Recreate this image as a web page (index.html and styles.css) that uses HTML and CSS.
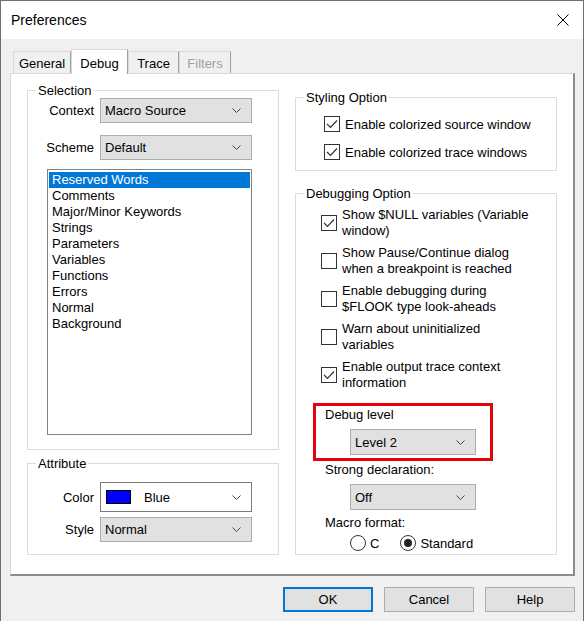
FILE: index.html
```html
<!DOCTYPE html>
<html>
<head>
<meta charset="utf-8">
<title>Preferences</title>
<link rel="stylesheet" href="styles.css">
</head>
<body>
<div class="window">
  <div class="titlebar">
    <span class="title">Preferences</span>
    <span class="close"><svg width="12" height="12" viewBox="0 0 12 12"><path d="M0.5 0.5 L11.5 11.5 M11.5 0.5 L0.5 11.5" stroke="#000" stroke-width="1" fill="none"/></svg></span>
  </div>
  <div class="client">
    <div class="tabs">
      <div class="tab t-general">General</div>
      <div class="tab t-debug active">Debug</div>
      <div class="tab t-trace">Trace</div>
      <div class="tab t-filters disabled">Filters</div>
    </div>
    <div class="panel">
      <div class="col col-left">
        <fieldset class="group selection">
          <legend>Selection</legend>
          <div class="field">
            <label>Context</label>
            <div class="combo">Macro Source<svg class="chev" width="9" height="5" viewBox="0 0 9 5"><polyline points="0.5,0.5 4.5,4.5 8.5,0.5" fill="none" stroke="#444"/></svg></div>
          </div>
          <div class="field field-2">
            <label>Scheme</label>
            <div class="combo">Default<svg class="chev" width="9" height="5" viewBox="0 0 9 5"><polyline points="0.5,0.5 4.5,4.5 8.5,0.5" fill="none" stroke="#444"/></svg></div>
          </div>
          <ul class="listbox">
            <li class="selected">Reserved Words</li>
            <li>Comments</li>
            <li>Major/Minor Keywords</li>
            <li>Strings</li>
            <li>Parameters</li>
            <li>Variables</li>
            <li>Functions</li>
            <li>Errors</li>
            <li>Normal</li>
            <li>Background</li>
          </ul>
        </fieldset>
        <fieldset class="group attribute">
          <legend>Attribute</legend>
          <div class="field field-color">
            <label>Color</label>
            <div class="combo combo-white"><span class="swatch"></span><span class="combo-text">Blue</span><svg class="chev" width="9" height="5" viewBox="0 0 9 5"><polyline points="0.5,0.5 4.5,4.5 8.5,0.5" fill="none" stroke="#444"/></svg></div>
          </div>
          <div class="field field-style">
            <label>Style</label>
            <div class="combo">Normal<svg class="chev" width="9" height="5" viewBox="0 0 9 5"><polyline points="0.5,0.5 4.5,4.5 8.5,0.5" fill="none" stroke="#444"/></svg></div>
          </div>
        </fieldset>
      </div>
      <div class="col col-right">
        <fieldset class="group styling">
          <legend>Styling Option</legend>
          <div class="styling-body">
            <div class="check">
              <span class="box"><svg width="14" height="14" viewBox="0 0 14 14"><polyline points="2,7 5.5,10.5 12,3.5" fill="none" stroke="#333" stroke-width="1.2"/></svg></span>
              <span>Enable colorized source window</span>
            </div>
            <div class="check">
              <span class="box"><svg width="14" height="14" viewBox="0 0 14 14"><polyline points="2,7 5.5,10.5 12,3.5" fill="none" stroke="#333" stroke-width="1.2"/></svg></span>
              <span>Enable colorized trace windows</span>
            </div>
          </div>
        </fieldset>
        <fieldset class="group debugging">
          <legend>Debugging Option</legend>
          <div class="debug-checks">
            <div class="check2">
              <span class="box"><svg width="14" height="14" viewBox="0 0 14 14"><polyline points="2,7 5.5,10.5 12,3.5" fill="none" stroke="#333" stroke-width="1.2"/></svg></span>
              <span class="ctext">Show $NULL variables (Variable<br>window)</span>
            </div>
            <div class="check2">
              <span class="box"></span>
              <span class="ctext">Show Pause/Continue dialog<br>when a breakpoint is reached</span>
            </div>
            <div class="check2">
              <span class="box"></span>
              <span class="ctext">Enable debugging during<br>$FLOOK type look-aheads</span>
            </div>
            <div class="check2">
              <span class="box"></span>
              <span class="ctext">Warn about uninitialized<br>variables</span>
            </div>
            <div class="check2">
              <span class="box"><svg width="14" height="14" viewBox="0 0 14 14"><polyline points="2,7 5.5,10.5 12,3.5" fill="none" stroke="#333" stroke-width="1.2"/></svg></span>
              <span class="ctext">Enable output trace context<br>information</span>
            </div>
          </div>
          <div class="lower">
            <div class="highlight">
              <div class="lbl">Debug level</div>
              <div class="combo combo-small">Level 2<svg class="chev" width="9" height="5" viewBox="0 0 9 5"><polyline points="0.5,0.5 4.5,4.5 8.5,0.5" fill="none" stroke="#444"/></svg></div>
            </div>
            <div class="lbl lbl-out">Strong declaration:</div>
            <div class="combo combo-small combo-out">Off<svg class="chev" width="9" height="5" viewBox="0 0 9 5"><polyline points="0.5,0.5 4.5,4.5 8.5,0.5" fill="none" stroke="#444"/></svg></div>
            <div class="lbl lbl-out lbl-macro">Macro format:</div>
            <div class="radios">
              <span class="radio"></span><span class="rtext">C</span>
              <span class="radio radio-2 on"><span class="dot"></span></span><span class="rtext">Standard</span>
            </div>
          </div>
        </fieldset>
      </div>
    </div>
    <div class="buttons">
      <div class="btn default">OK</div>
      <div class="btn">Cancel</div>
      <div class="btn">Help</div>
    </div>
  </div>
</div>
</body>
</html>
```

FILE: styles.css
```css
* { box-sizing: border-box; }
html, body { margin: 0; padding: 0; background: #fff; }
body {
  font-family: "Liberation Sans", Arial, sans-serif;
  font-size: 13px;
  color: #000;
}
.window {
  width: 584px;
  height: 621px;
  border: 1px solid #6f6f6f;
  border-bottom: none;
  display: flex;
  flex-direction: column;
  background: #f0f0f0;
}
.titlebar {
  flex: none;
  height: 38px;
  background: #fff;
  display: flex;
  align-items: center;
  justify-content: space-between;
  padding: 0 14px 0 10px;
}
.title { font-size: 14px; }
.close { display: flex; width: 12px; height: 12px; }

.client { flex: 1; padding: 10px 8px 0 9px; }

.tabs {
  display: flex;
  align-items: flex-end;
  height: 24px;
  padding-left: 3px;
  position: relative;
  z-index: 1;
}
.tab {
  height: 22px;
  display: flex;
  align-items: center;
  justify-content: center;
  border: 1px solid #d9d9d9;
  border-bottom: none;
  border-right-color: #a0a0a0;
  background: #f0f0f0;
  padding-top: 1px;
}
.t-general { width: 58px; }
.t-debug { width: 57px; }
.t-trace { width: 51px; }
.t-filters { width: 52px; }
.tab.active {
  height: 25px;
  margin-bottom: -1px;
  background: #fff;
  padding-top: 2px;
}
.tab.disabled { color: #a0a0a0; }

.panel {
  width: 565px;
  height: 503px;
  background: #fff;
  border: 1px solid #d9d9d9;
  border-right: 2px solid #8c8c8c;
  border-bottom: 2px solid #8c8c8c;
  display: flex;
  gap: 16px;
  padding: 9px 0 0 16px;
}
.col { display: flex; flex-direction: column; }
.col-left { width: 252px; }
.col-right { width: 262px; margin-top: 7px; }

.group {
  margin: 0;
  padding: 0;
  border: 1px solid #dcdcdc;
  min-width: 0;
}
.group legend {
  padding: 0 2px;
  margin-left: 8px;
  line-height: 15px;
}

.selection { padding-bottom: 14px; }
.field {
  display: grid;
  grid-template-columns: 66px 152px;
  column-gap: 6px;
  align-items: center;
}
.field label { text-align: right; }
.field-2 { margin-top: 12px; }

.combo {
  height: 25px;
  border: 1px solid #adadad;
  background: #e1e1e1;
  display: flex;
  align-items: center;
  justify-content: space-between;
  padding: 0 10px 0 4px;
}
.chev { flex: none; }
.combo-white {
  height: 30px;
  background: #fff;
  border-color: #7a7a7a;
  justify-content: flex-start;
  padding-left: 5px;
}
.swatch {
  width: 25px;
  height: 14px;
  background: #0000ff;
  border: 1px solid #000;
  flex: none;
}
.combo-text { margin-left: 13px; flex: 1; }

.listbox {
  list-style: none;
  margin: 9px 0 0 19px;
  width: 205px;
  height: 266px;
  border: 1px solid #828282;
  background: #fff;
  padding: 2px 1px;
}
.listbox li { line-height: 16px; padding-left: 3px; }
.listbox li.selected { background: #0078d7; color: #fff; }

.attribute { margin-top: 6px; padding-bottom: 12px; }
.field-color { margin-top: 11px; }
.field-style { margin-top: 5px; }

.styling-body { padding: 9px 0 8px 28px; display: flex; flex-direction: column; gap: 8px; }
.check { display: flex; align-items: center; gap: 5px; height: 20px; }
.box {
  width: 16px;
  height: 16px;
  border: 1px solid #333;
  background: #fff;
  flex: none;
  display: flex;
  align-items: center;
  justify-content: center;
}

.debugging { margin-top: 15px; padding-bottom: 3px; }
.debug-checks { padding: 6px 0 0 25px; display: flex; flex-direction: column; gap: 6px; }
.check2 { display: flex; align-items: center; gap: 5px; }
.ctext { line-height: 16px; white-space: nowrap; }

.lower { padding-left: 17px; display: flex; flex-direction: column; align-items: flex-start; }
.highlight {
  margin-top: 12px;
  width: 180px;
  border: 3px solid #e8000b;
  padding: 1px 0 3px 9px;
}
.lbl { line-height: 16px; }
.combo-small { width: 126px; height: 26px; margin: 6px 0 0 25px; }
.lbl-out { margin-top: 1px; padding-left: 12px; }
.combo-out { margin-left: 37px; }
.lbl-macro { margin-top: 5px; }

.radios { display: flex; align-items: center; margin-top: 4px; padding-left: 37px; height: 16px; }
.radio {
  width: 16px;
  height: 16px;
  border: 1px solid #333;
  border-radius: 50%;
  background: #fff;
  display: flex;
  align-items: center;
  justify-content: center;
  flex: none;
}
.radio-2 { margin-left: 21px; }
.dot { width: 8px; height: 8px; border-radius: 50%; background: #222; }
.rtext { margin-left: 4px; }

.buttons {
  display: flex;
  justify-content: flex-end;
  gap: 11px;
  margin-top: 11px;
}
.btn {
  width: 90px;
  height: 25px;
  background: #e1e1e1;
  border: 1px solid #adadad;
  display: flex;
  align-items: center;
  justify-content: center;
}
.btn.default { border: 2px solid #0078d7; }
```
